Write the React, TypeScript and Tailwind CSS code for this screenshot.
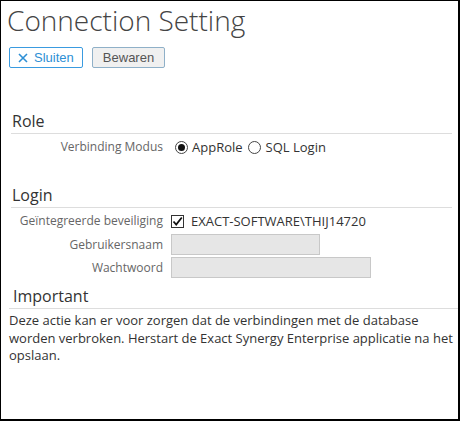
import React from "react";

function Radio({ checked }: { checked?: boolean }) {
  return (
    <span className="inline-flex items-center justify-center w-[13px] h-[13px] rounded-full border border-[#444] bg-white">
      {checked && <span className="w-[7px] h-[7px] rounded-full bg-[#111]" />}
    </span>
  );
}

export default function App() {
  const font = { fontFamily: '"Open Sans", "Noto Sans", sans-serif' };
  return (
    <div
      className="w-[460px] h-[421px] border border-black border-r-2 border-b-2 bg-white overflow-hidden text-[#333]"
      style={font}
    >
      <h1 className="ml-[6px] mt-[1px] text-[28px] leading-[36px] font-light text-[#444]">
        Connection Setting
      </h1>
      <div className="flex gap-[9px] ml-[8px] mt-[9px]" style={{ fontFamily: '"Liberation Sans", Arial, sans-serif' }}>
        <button className="flex items-center gap-[6px] h-[21px] w-[74px] pl-[8px] border border-[#3a9be0] rounded-[2px] bg-white text-[#2d8fd5] text-[13px]">
          <svg width="10" height="10" viewBox="0 0 10 10">
            <path d="M1 1 L9 9 M9 1 L1 9" stroke="#2d8fd5" strokeWidth="1.6" />
          </svg>
          Sluiten
        </button>
        <button className="flex items-center justify-center h-[21px] w-[73px] border border-[#8fb0c8] rounded-[2px] bg-[#f0f0f0] text-[#555] text-[13px]">
          Bewaren
        </button>
      </div>

      <div className="ml-[10px] mr-[6px] mt-[42px]">
        <div className="text-[16px] leading-[22px] text-[#333] pl-[1px] border-b border-[#ddd] pb-[1px]">Role</div>
        <div className="flex items-center mt-[4px] leading-[18px]">
          <div className="w-[152px] text-right text-[#666] text-[12px] whitespace-nowrap">Verbinding Modus</div>
          <div className="flex items-center ml-[12px] text-[13px] text-[#333]">
            <Radio checked />
            <span className="ml-[4px]">AppRole</span>
            <span className="ml-[5px] flex"><Radio /></span>
            <span className="ml-[5px]">SQL Login</span>
          </div>
        </div>
      </div>

      <div className="ml-[10px] mr-[6px] mt-[28px]">
        <div className="text-[16px] leading-[22px] text-[#333] pl-[1px] border-b border-[#ddd] pb-[1px]">Login</div>
        <div className="flex items-center mt-[4px] leading-[18px]">
          <div className="w-[152px] text-right text-[#666] text-[12px] whitespace-nowrap">Geïntegreerde beveiliging</div>
          <div className="flex items-center ml-[8px]">
            <span className="w-[13px] h-[13px] border border-[#333] bg-white flex items-center justify-center">
              <svg width="11" height="11" viewBox="0 0 11 11">
                <path d="M1.5 5.5 L4.2 8.5 L9.8 1.5" stroke="#111" strokeWidth="1.8" fill="none" />
              </svg>
            </span>
            <span className="ml-[7px] text-[13px] text-[#333]">EXACT-SOFTWARE\THIJ14720</span>
          </div>
        </div>
        <div className="flex items-center mt-[4px]">
          <div className="w-[152px] text-right text-[#666] text-[12px] whitespace-nowrap">Gebruikersnaam</div>
          <div className="ml-[8px] w-[149px] h-[21px] bg-[#e6e6e6] border border-[#c8c8c8]" />
        </div>
        <div className="flex items-center mt-[2px]">
          <div className="w-[152px] text-right text-[#666] text-[12px] whitespace-nowrap">Wachtwoord</div>
          <div className="ml-[8px] w-[200px] h-[21px] bg-[#e6e6e6] border border-[#c8c8c8]" />
        </div>
      </div>

      <div className="ml-[8px] mt-[7px]">
        <div className="text-[16px] leading-[22px] text-[#333] pl-[4px] border-b border-[#ddd] pb-[1px]">Important</div>
        <p className="text-[13px] leading-[17.5px] text-[#333] mt-[3px] pr-[2px]">
          Deze actie kan er voor zorgen dat de verbindingen met de database worden verbroken. Herstart de Exact Synergy Enterprise applicatie na het opslaan.
        </p>
      </div>
    </div>
  );
}
